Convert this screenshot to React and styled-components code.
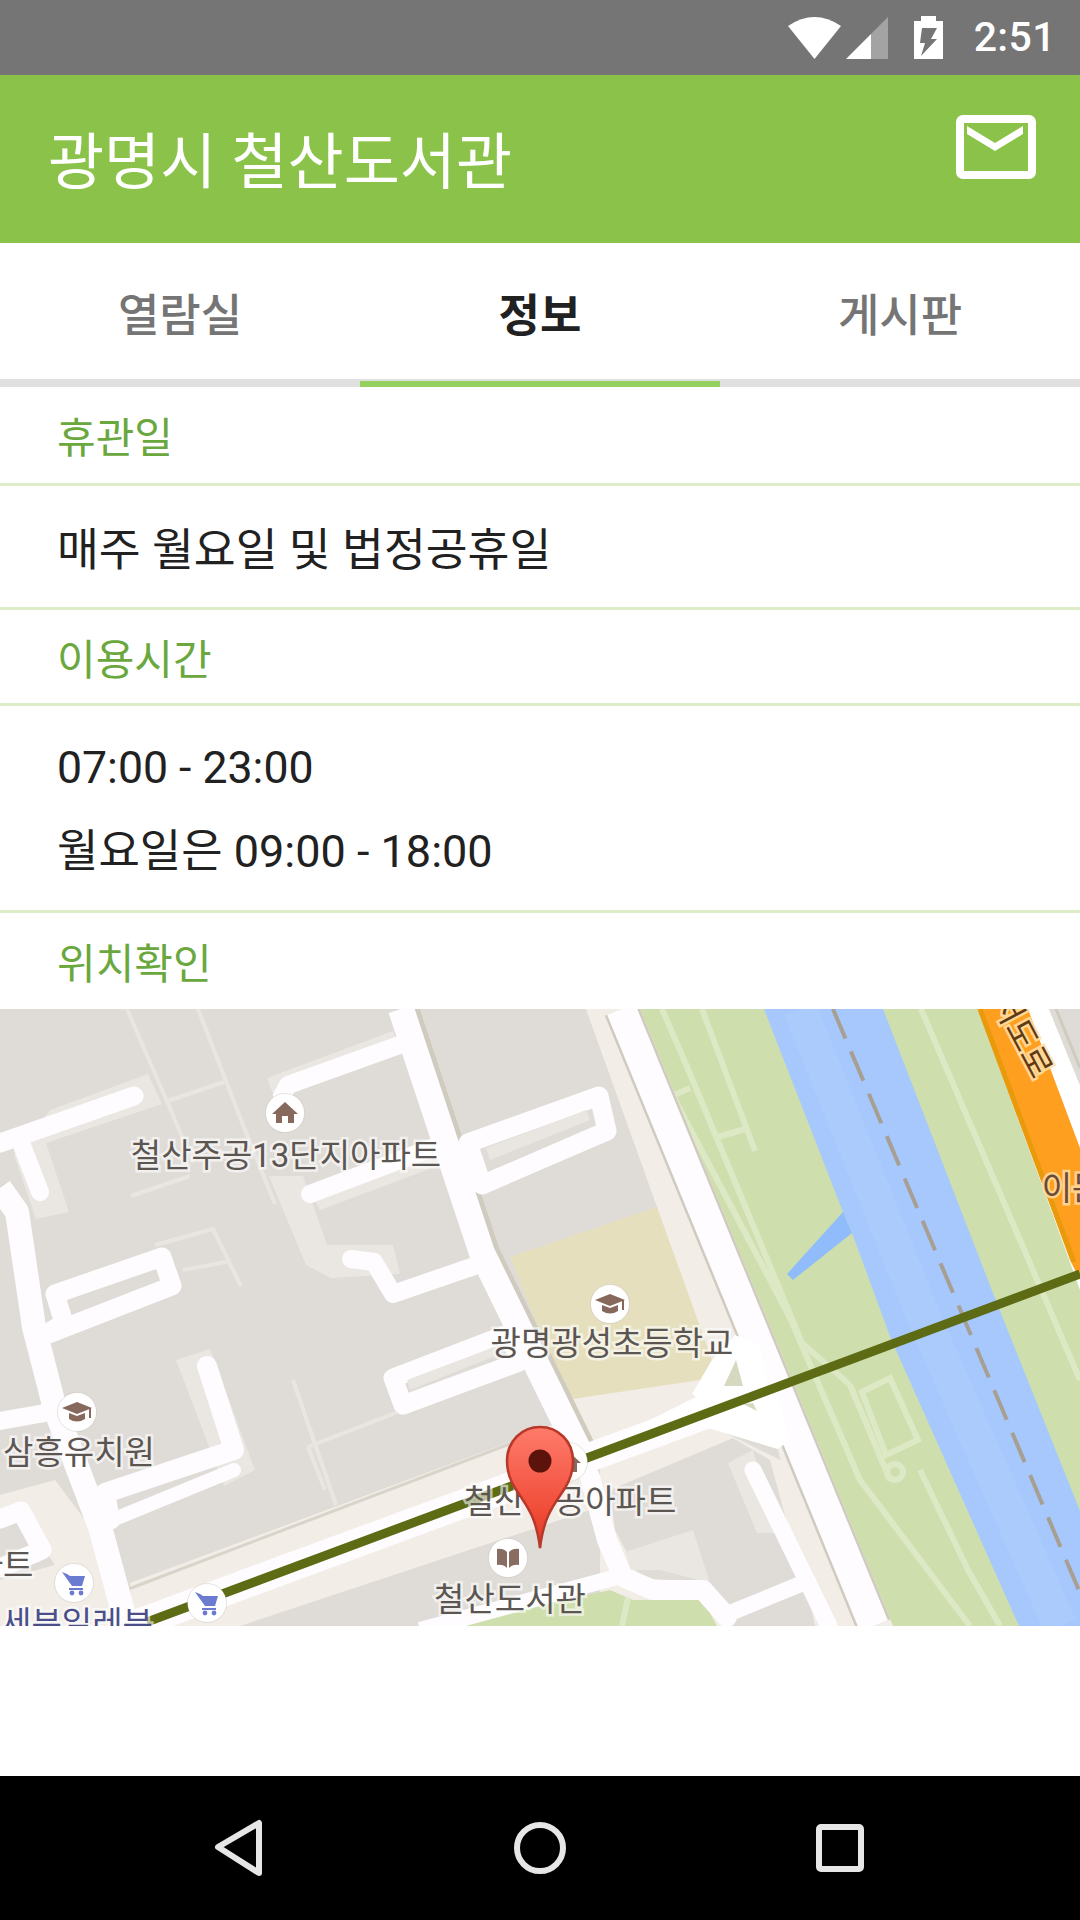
import React from "react";
import styled, { createGlobalStyle } from "styled-components";

const GlobalStyle = createGlobalStyle`
  html, body { margin: 0; padding: 0; background: #fff; }
  body { font-family: Roboto, "Noto Sans CJK KR", sans-serif; }
`;

const Screen = styled.div`
  width: 1080px;
  height: 1920px;
  display: flex;
  flex-direction: column;
  overflow: hidden;
  background: #fff;
`;

const StatusBar = styled.div`
  height: 75px;
  flex: none;
  background: #757575;
  display: flex;
  justify-content: flex-end;
  align-items: center;
  padding-right: 24px;
  color: #fff;
`;

const StatusIcon = styled.svg`
  display: block;
  flex: none;
  margin-right: ${(p) => p.$gap}px;
`;

const Clock = styled.span`
  font-size: 41px;
  font-weight: 500;
  line-height: 75px;
  letter-spacing: 0.4px;
`;

const AppBar = styled.header`
  height: 168px;
  flex: none;
  background: #8bc34a;
  display: flex;
  justify-content: space-between;
  align-items: flex-start;
  padding: 0 44px 0 48px;
`;

const Title = styled.h1`
  margin: 0;
  padding-top: 4px;
  color: #fff;
  font-size: 61px;
  font-weight: 400;
  line-height: 168px;
  white-space: nowrap;
`;

const MailButton = styled.svg`
  display: block;
  margin-top: 40px;
`;

const TabBar = styled.nav`
  flex: none;
  display: flex;
  height: 136px;
  border-bottom: 8px solid #e0e0e0;
`;

const Tab = styled.div`
  position: relative;
  flex: 1;
  display: flex;
  align-items: center;
  justify-content: center;
  padding-top: 3px;
  font-size: 45px;
  font-weight: ${(p) => (p.$active ? 700 : 500)};
  color: ${(p) => (p.$active ? "#212121" : "#757575")};

  &::after {
    content: "";
    display: ${(p) => (p.$active ? "block" : "none")};
    position: absolute;
    left: 0;
    right: 0;
    bottom: -8px;
    height: 6px;
    background: #93d25f;
  }
`;

const SectionLabel = styled.div`
  flex: none;
  height: ${(p) => p.$height}px;
  padding-left: 57px;
  font-size: 42px;
  line-height: ${(p) => p.$height + 8}px;
  color: #6aa83e;
  border-bottom: ${(p) => (p.$plain ? "none" : "3px solid #dcedc8")};
`;

const SectionBody = styled.div`
  flex: none;
  padding: ${(p) => p.$top}px 0 ${(p) => 38 - p.$top}px 57px;
  border-bottom: 3px solid #dcedc8;
`;

const BodyLine = styled.div`
  font-size: ${(p) => p.$size || 45}px;
  line-height: 83px;
  color: #212121;
  white-space: nowrap;
`;

const MapSvg = styled.svg`
  display: block;
  flex: none;
  width: 1080px;
  height: 617px;
`;

const Spacer = styled.div`
  flex: 1;
`;

const NavBar = styled.footer`
  height: 144px;
  flex: none;
  background: #000;
  display: flex;
  justify-content: center;
  align-items: center;
`;

const NavSlot = styled.div`
  width: 300px;
  display: flex;
  justify-content: center;
`;

const NavIcon = styled.svg`
  display: block;
  fill: none;
  stroke: #e6e6e6;
  stroke-width: 6;
  stroke-linejoin: round;
`;

// map parts
const Area = styled.polygon`
  fill: ${(p) => p.$fill};
`;

const Road = styled.polyline`
  fill: none;
  stroke: ${(p) => p.$color || "#fefcfe"};
  stroke-width: ${(p) => p.$w}px;
  stroke-linecap: ${(p) => p.$cap || "round"};
  stroke-linejoin: round;
`;

const LoopRoad = styled.polygon`
  fill: none;
  stroke: #fefcfe;
  stroke-width: ${(p) => p.$w}px;
  stroke-linejoin: round;
`;

const PlaceLabel = styled.text`
  font-family: Roboto, "Noto Sans CJK KR", sans-serif;
  font-size: 33px;
  fill: ${(p) => p.$color || "#5c5652"};
  stroke: ${(p) => p.$halo || "rgba(255,255,255,0.6)"};
  stroke-width: 5px;
  paint-order: stroke;
  text-anchor: middle;
  dominant-baseline: central;
`;

const PoiDisc = styled.circle`
  fill: #fff;
  stroke: rgba(120, 110, 100, 0.18);
  stroke-width: 1px;
`;

const Poi = ({ x, y, children }) => (
  <g transform={`translate(${x} ${y})`}>
    <PoiDisc r="19.5" />
    {children}
  </g>
);

const HouseGlyph = () => (
  <path fill="#86685c" d="M0 -11 L13 1 H9 V10 H3 V3 H-3 V10 H-9 V1 H-13 Z" />
);

const CapGlyph = () => (
  <g fill="#86685c">
    <path d="M0 -10 L15 -4 L0 2 L-15 -4 Z" />
    <path d="M-8 1 L0 4 L8 1 V7 Q0 12 -8 7 Z" />
    <rect x="12" y="-4" width="2" height="10" />
  </g>
);

const BookGlyph = () => (
  <g fill="#8a6d62">
    <path d="M-11 -9 Q-5 -10 -1 -6 V10 Q-5 6 -11 7 Z" />
    <path d="M11 -9 Q5 -10 1 -6 V10 Q5 6 11 7 Z" />
  </g>
);

const CartGlyph = () => (
  <g fill="#6b7bd0">
    <path d="M-12 -11 L-7 -9 L-4 -7 H11 L8 3 H-2 Z" />
    <path d="M-5 5 H9 V7 H-5 Z" />
    <circle cx="-2" cy="10" r="2.4" />
    <circle cx="7" cy="10" r="2.4" />
  </g>
);

const ThinPaths = [
  "127,1009 169,1106 193,1163",
  "198,1009 245,1130 275,1204",
  "165,1102 224,1082",
  "131,1196 190,1176",
  "155,1245 213,1229 241,1286",
  "183,1270 231,1261",
  "293,1380 336,1505",
  "308,1447 510,1368",
  "308,1447 325,1490",
];

const PalePatches = [
  "50,1110 148,1074 162,1104 46,1143 69,1212 36,1219 14,1155",
  "269,1176 303,1176 327,1245 393,1245 400,1274 331,1278 306,1265",
  "267,1078 393,1031 400,1050 275,1100",
  "176,1360 210,1349 255,1470 224,1486",
  "625,1552 693,1530 710,1583 660,1570 630,1570",
  "728,1463 753,1450 777,1533 757,1533",
  "320,1210 440,1165 436,1152 312,1196",
];

const ParkPaths = [
  "662,1009 688,1069 802,1343 850,1385",
  "702,1009 755,1151",
  "672,1096 690,1088",
  "718,1137 745,1129",
  "674,1098 790,1318 860,1480 970,1626",
  "920,1470 968,1570 1000,1626",
  "921,1009 1080,1380",
  "850,1385 890,1480",
];

const Thin = ({ points }) => <Road points={points} $w={4} $color="#e9e6e1" $cap="butt" />;
const ParkPath = ({ points }) => <Road points={points} $w={6} $color="#dde8c5" $cap="butt" />;

const CityMap = () => (
  <MapSvg viewBox="0 1009 1080 617">
    <defs>
      <linearGradient id="pin" x1="0" y1="0" x2="0" y2="1">
        <stop offset="0" stopColor="#ff7b6b" />
        <stop offset="0.7" stopColor="#f04c38" />
        <stop offset="1" stopColor="#d93a28" />
      </linearGradient>
    </defs>
    <rect x="0" y="1009" width="1080" height="617" fill="#dfdcd7" />

    {/* park and river */}
    <Area points="636,1009 1080,1009 1080,1626 893,1626" $fill="#cfdead" />
    {ParkPaths.map((p) => <ParkPath key={p} points={p} />)}
    <Area points="764,1009 883,1009 998,1306 1080,1511 1080,1626 1019,1626 891,1339 852,1233 843,1212" $fill="#a6c8fc" />
    <Road points="800,1009 925,1320 1060,1626" $w={34} $color="#abcbfd" $cap="butt" />
    <Area points="843,1212 852,1233 793,1280 787,1274" $fill="#90bcfb" />
    <Road points="833,1009 1080,1593" $w={4} $color="#a89f94" $cap="butt" strokeDasharray="32 14" />
    <polygon points="862,1392 890,1378 918,1440 886,1455" fill="none" stroke="#dde8c5" strokeWidth="6" />
    <circle cx="895" cy="1472" r="8" fill="none" stroke="#dde8c5" strokeWidth="6" />

    {/* expressway */}
    <Area points="978,1009 1049,1009 1080,1085 1080,1290 1075,1276" $fill="#fff" />
    <Area points="1049,1009 1080,1009 1080,1085" $fill="#dfdcd7" />
    <Road points="1056,1009 1080,1068" $w={3} $color="#cfcbbf" $cap="butt" />
    <Area points="978,1009 1028,1009 1080,1148 1080,1280 1070,1260" $fill="#ff9f1f" />
    <Road points="980,1009 1074,1262" $w={5} $color="#e89a0c" $cap="butt" />

    {/* school */}
    <Area points="510,1257 660,1206 712,1360 692,1394 574,1417" $fill="#e6dfbe" />

    {/* sidewalks */}
    <Area points="586,1009 640,1009 893,1626 815,1626 778,1449 697,1424 700,1390 712,1360" $fill="#f2ede7" />
    <Area points="0,1495 55,1480 100,1540 127,1626 0,1626" $fill="#f2ede7" />
    <Area points="130,1583 507,1443 590,1410 590,1510 240,1626 131,1626" $fill="#f2ede7" />
    <Area points="566,1400 700,1380 720,1400 586,1450" $fill="#f2ede7" />
    <Area points="600,1450 700,1420 800,1470 810,1626 600,1626" $fill="#f2ede7" />
    <Area points="610,1490 733,1438 770,1460 815,1626 726,1626 700,1582 640,1578 615,1530" $fill="#dfdcd7" />
    <Area points="0,1525 25,1520 55,1565 0,1580" $fill="#dfdcd7" />

    {/* bottom park */}
    <Area points="447,1626 610,1590 633,1600 703,1600 717,1626" $fill="#cfdead" />
    <Road points="628,1598 622,1626" $w={6} $color="#dde8c5" $cap="butt" />

    {ThinPaths.map((p) => <Thin key={p} points={p} />)}
    {PalePatches.map((p) => <Area key={p} points={p} $fill="#eae7e3" />)}

    {/* road edges */}
    <Road points="405,1009 486,1253 582,1449" $w={28} $color="#cfcbbf" $cap="butt" />
    <Road points="126,1590 520,1440" $w={3} $color="#d8d4ca" $cap="butt" />

    {/* main roads */}
    <Road points="621,1009 874,1626" $w={35} $color="#cfcbbf" $cap="butt" />
    <Road points="621,1009 874,1626" $w={30} $cap="butt" />
    <Road points="401,1009 482,1253 578,1449" $w={26} $cap="butt" />
    <Road points="590,1477 607,1540 623,1577 653,1590 703,1590 727,1617" $w={20} />
    <Road points="0,1188 17,1212 34,1327 55,1409 100,1527 127,1626" $w={24} $cap="butt" />
    <Road points="131,1626 778,1388" $w={29} $cap="butt" />
    <polygon points="692,1394 712,1360 735,1335 760,1345 770,1400 700,1400" fill="#fff" />
    <polygon points="590,1450 700,1395 775,1385 790,1440 778,1449 698,1425 590,1458" fill="#fff" />
    <polygon points="736,1360 743,1386 724,1386" fill="#d6d9bf" />
    <polygon points="743,1404 757,1411 753,1403" fill="#d6d9bf" />

    {/* side streets */}
    <Road points="134,1096 0,1143" $w={19} />
    <Road points="21,1143 40,1192" $w={18} />
    <Road points="405,1043 288,1085 282,1096" $w={18} />
    <Road points="310,1194 448,1142" $w={18} />
    <Road points="351,1259 374,1262 393,1294 486,1262" $w={18} />
    <LoopRoad points="41,1337 172,1286 162,1257 55,1294 64,1323" $w={19} />
    <Road points="0,1421 45,1413" $w={18} />
    <Road points="207,1366 234,1450 105,1493 110,1520" $w={20} />
    <Road points="100,1525 234,1470" $w={14} />
    <LoopRoad points="468,1143 599,1096 607,1131 482,1185" $w={19} />
    <Area points="490,1160 590,1120 586,1110 486,1148" $fill="#e9e6e2" />
    <LoopRoad points="393,1378 510,1333 519,1362 403,1405" $w={19} />
    <Area points="410,1390 505,1352 502,1344 407,1380" $fill="#e9e6e2" />
    <Road points="0,1519 21,1511 42,1550 0,1568" $w={19} />
    <Road points="753,1470 829,1626" $w={17} />
    <Road points="808,1581 730,1613" $w={16} />
    <Road points="617,1577 420,1630" $w={16} $cap="butt" />

    {/* transit line */}
    <Road points="147,1622 1080,1274" $w={9} $color="#5c6b14" $cap="butt" />

    <Poi x={285} y={1113}><HouseGlyph /></Poi>
    <Poi x={77} y={1412}><CapGlyph /></Poi>
    <Poi x={610} y={1304}><CapGlyph /></Poi>
    <Poi x={568} y={1462}><HouseGlyph /></Poi>
    <Poi x={508} y={1558}><BookGlyph /></Poi>
    <Poi x={74} y={1583}><CartGlyph /></Poi>
    <Poi x={207} y={1603}><CartGlyph /></Poi>

    <PlaceLabel x={286} y={1155}>철산주공13단지아파트</PlaceLabel>
    <PlaceLabel x={612} y={1343}>광명광성초등학교</PlaceLabel>
    <PlaceLabel x={79} y={1452}>삼흥유치원</PlaceLabel>
    <PlaceLabel x={570} y={1501}>철산주공아파트</PlaceLabel>
    <PlaceLabel x={510} y={1599}>철산도서관</PlaceLabel>
    <PlaceLabel x={3} y={1565}>파트</PlaceLabel>
    <PlaceLabel x={77} y={1623} $color="#4a4f8a">세븐일레븐</PlaceLabel>
    <PlaceLabel x={1072} y={1188} $color="#6b4a3a" $halo="rgba(255,225,170,0.8)">이문</PlaceLabel>
    <PlaceLabel
      x={1022}
      y={1035}
      $color="#5f3a12"
      $halo="rgba(255,225,170,0.85)"
      transform="rotate(62 1022 1035)"
    >
      서도로
    </PlaceLabel>

    {/* marker */}
    <path
      d="M540 1548 C536 1515 526 1505 515 1488 C510 1480 507 1472 507 1461 C507 1441 522 1427 540 1427 C558 1427 573 1441 573 1461 C573 1472 570 1480 565 1488 C554 1505 544 1515 540 1548 Z"
      fill="url(#pin)"
      stroke="#b8382a"
      strokeWidth="2.5"
    />
    <circle cx="540" cy="1461" r="11.5" fill="#5b130c" />
  </MapSvg>
);

export default function App() {
  return (
    <Screen>
      <GlobalStyle />
      <StatusBar>
        <StatusIcon width="53" height="42" viewBox="0 0 53 42" $gap={5}>
          <path fill="#fff" d="M0 9 Q26.5 -9 53 9 L26.5 42 Z" />
        </StatusIcon>
        <StatusIcon width="42" height="42" viewBox="0 0 42 42" $gap={26}>
          <path fill="#a3a3a3" d="M42 0 V42 H25 V17 Z" />
          <path fill="#fff" d="M25 17 V42 H0 Z" />
        </StatusIcon>
        <StatusIcon width="29" height="43" viewBox="0 0 29 43" $gap={31}>
          <path
            fill="#fff"
            d="M7 0 H22 V5 H29 V43 H0 V5 H7 Z M8 12 L6 27 H11 L7 40 L23 23 H17 L23 12 Z"
            fillRule="evenodd"
          />
        </StatusIcon>
        <Clock>2:51</Clock>
      </StatusBar>

      <AppBar>
        <Title>광명시 철산도서관</Title>
        <MailButton width="80" height="64" viewBox="0 0 80 64">
          <rect x="4" y="4" width="72" height="56" rx="3" fill="none" stroke="#fff" strokeWidth="8" />
          <path fill="#fff" d="M11 11 L39 28 L67 11 V19 L39 36 L11 19 Z" />
        </MailButton>
      </AppBar>

      <TabBar>
        <Tab>열람실</Tab>
        <Tab $active>정보</Tab>
        <Tab>게시판</Tab>
      </TabBar>

      <SectionLabel $height={96}>휴관일</SectionLabel>
      <SectionBody $top={23}>
        <BodyLine $size={45.5}>매주 월요일 및 법정공휴일</BodyLine>
      </SectionBody>
      <SectionLabel $height={93}>이용시간</SectionLabel>
      <SectionBody $top={21}>
        <BodyLine $size={44.6}>07:00 - 23:00</BodyLine>
        <BodyLine>월요일은 09:00 - 18:00</BodyLine>
      </SectionBody>
      <SectionLabel $height={96} $plain>위치확인</SectionLabel>

      <CityMap />
      <Spacer />

      <NavBar>
        <NavSlot>
          <NavIcon width="60" height="60" viewBox="0 0 60 60">
            <path d="M8 29 L49 5 V55 Z" />
          </NavIcon>
        </NavSlot>
        <NavSlot>
          <NavIcon width="56" height="56" viewBox="0 0 56 56">
            <circle cx="28" cy="28" r="23" />
          </NavIcon>
        </NavSlot>
        <NavSlot>
          <NavIcon width="48" height="48" viewBox="0 0 48 48">
            <rect x="3" y="3" width="42" height="42" rx="2" />
          </NavIcon>
        </NavSlot>
      </NavBar>
    </Screen>
  );
}
